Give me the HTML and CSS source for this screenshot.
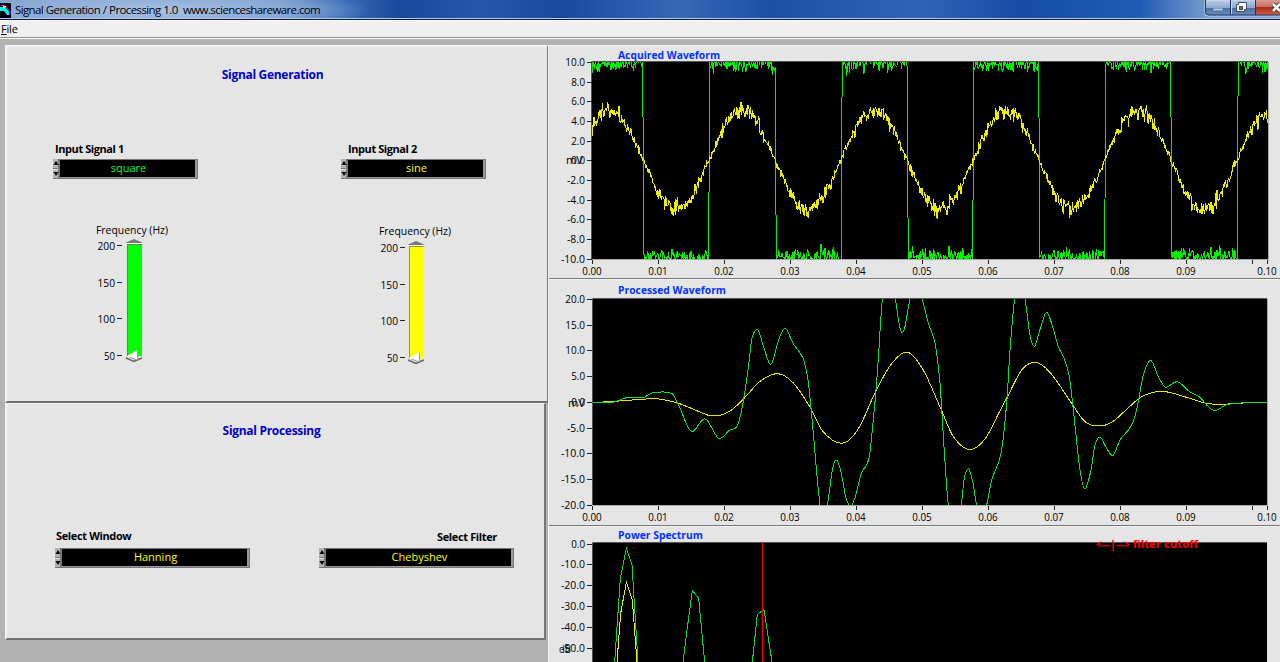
FILE: index.html
```html
<!DOCTYPE html>
<html lang="en">
<head>
<meta charset="utf-8">
<title>Signal Generation / Processing 1.0</title>
<link rel="stylesheet" href="styles.css">
</head>
<body>
<div class="window">
  <header class="titlebar">
    <svg class="app-icon" width="11" height="15" viewBox="0 0 11 15"><rect width="11" height="15" fill="#000"/><path d="M1 2.500h4l5 6v3" fill="none" stroke="#f0f"/><path d="M0 4h5l4 4.500V12H7L4 8H0z" fill="#00f5ee"/><path d="M3 3h3v1.500H3z" fill="#ff0"/></svg>
    <span class="title-text">Signal Generation / Processing 1.0&nbsp; www.scienceshareware.com</span>
    <svg class="controls" width="76" height="17" viewBox="0 0 76 17">
      <defs>
        <linearGradient id="glass" x2="0" y2="1"><stop stop-color="#b9cbe4"/><stop offset=".48" stop-color="#8fa9cf"/><stop offset=".5" stop-color="#476da9"/><stop offset="1" stop-color="#6b91c6"/></linearGradient>
        <linearGradient id="close" x2="0" y2="1"><stop stop-color="#d99c91"/><stop offset=".48" stop-color="#c66c5c"/><stop offset=".5" stop-color="#a92a17"/><stop offset="1" stop-color="#cf6047"/></linearGradient>
      </defs>
      <path d="M1 0v13q0 3 3 3h72V0z" fill="url(#glass)" stroke="#d1def0"/>
      <path d="M52 0h24v15H52z" fill="url(#close)"/>
      <path d="M1.500 0v12q0 3 3 3H76M26.500 0v15M51.500 0v15" fill="none" stroke="#1f355e"/>
      <path d="M27.500 0v14" stroke="#c8d7eb"/>
      <rect x="9.500" y="8.500" width="9" height="2" fill="#c3d1e4" stroke="#8296b6"/>
      <path d="M34.500 2.500h8v7h-2v2h-8v-7h2z" fill="#f4f4f4" stroke="#444b5a"/><rect x="35.500" y="6.500" width="3" height="3" fill="#57739f" stroke="#444b5a"/>
      <path d="M69 4l7 7M76 4l-7 7" stroke="#4d3437" stroke-width="4.500"/><path d="M69 4l7 7M76 4l-7 7" stroke="#fff" stroke-width="2.500"/>
    </svg>
  </header>
  <nav class="menubar"><span class="menu-item"><u>F</u>ile</span></nav>
  <main class="workspace">
    <div class="left">
      <section class="panel generation">
        <h2 class="heading">Signal Generation</h2>
        <div class="inputs">
          <div class="channel">
            <label class="label">Input Signal 1</label>
            <div class="selector"><svg class="spin" width="6" height="20"><use href="#spinner"/></svg><span class="value green">square</span></div>
            <svg class="slider" data-color="#00ff00" width="90" height="145" viewBox="0 0 90 145"></svg>
          </div>
          <div class="channel second">
            <label class="label">Input Signal 2</label>
            <div class="selector"><svg class="spin" width="6" height="20"><use href="#spinner"/></svg><span class="value">sine</span></div>
            <svg class="slider" data-color="#ffff00" width="90" height="145" viewBox="0 0 90 145"></svg>
          </div>
        </div>
      </section>
      <section class="panel processing">
        <h2 class="heading">Signal Processing</h2>
        <div class="filters">
          <div class="filter">
            <label class="label">Select Window</label>
            <div class="selector"><svg class="spin" width="6" height="20"><use href="#spinner"/></svg><span class="value">Hanning</span></div>
          </div>
          <div class="filter last">
            <label class="label">Select Filter</label>
            <div class="selector"><svg class="spin" width="6" height="20"><use href="#spinner"/></svg><span class="value">Chebyshev</span></div>
          </div>
        </div>
      </section>
    </div>
    <div class="charts">
      <svg id="acquired" class="chart" width="732" height="234" viewBox="548 45 732 234"></svg>
      <svg id="processed" class="chart" width="732" height="247" viewBox="548 279 732 247"></svg>
      <svg id="spectrum" class="chart" width="732" height="136" viewBox="548 526 732 136"></svg>
    </div>
  </main>
</div>
<svg class="symbols" width="0" height="0">
  <symbol id="spinner" viewBox="0 0 6 20"><path d="M0 0h6v20H0z" fill="#b2b2b2"/><path d="M5.500 0v9.500H0M5.500 10v9.500H0" fill="none" stroke="#777"/><path d="M0 10.500h5" stroke="#e8e8e8"/><path d="M0.500 6L3 2l2.500 4zM0.500 13L3 17l2.500-4z" fill="#000"/></symbol>
</svg>
<script src="charts.js"></script>
</body>
</html>
```

FILE: styles.css
```css
* { box-sizing: border-box; }
body { margin: 0; overflow: hidden; background: #b2b2b2; color: #000; font-family: "Open Sans", "Noto Sans", sans-serif; font-size: 11px; }
.window { width: 1280px; height: 662px; display: flex; flex-direction: column; overflow: hidden; }
.titlebar { flex: none; height: 21px; display: flex; align-items: flex-start; border-bottom: 1px solid #fff; box-shadow: inset 0 -1px #07194a, inset 0 -2px #b5cae8;
  background: radial-gradient(ellipse 210px 22px at 160px 10px, rgba(180,200,230,.85), rgba(150,180,220,.65) 65%, transparent), linear-gradient(90deg, #7e9dcc 0, #6a90c8 280px, #3d6fb9 340px, #18489a 400px, #2558a8 480px, #174a9d 560px, #3669b5 680px, #1b50a5 770px, #2f65b5 920px, #164ca6 1020px, #205bb4 1140px, #7398cc 1205px, #7398cc); }
.app-icon { flex: none; margin-top: 3px; }
.title-text { margin: 2px 0 0 4px; font-size: 11.5px; line-height: 16px; letter-spacing: -.61px; word-spacing: .3px; white-space: pre; }
.controls { flex: none; margin-left: auto; }
.menubar { flex: none; height: 18px; background: #f0f0f0; border-bottom: 1px solid #fff; box-shadow: inset 0 -1px #8d8d8d; }
.menu-item { display: block; padding-left: 1px; line-height: 16px; letter-spacing: -.2px; }
.workspace { flex: 1; display: flex; padding-top: 6px; background: #b2b2b2; }
.left { width: 548px; padding-left: 5px; }
.panel { background: #e5e5e5; border: solid; border-width: 2px; border-color: #f3f3f3 #777 #707070 #f3f3f3; }
.generation { width: 543px; height: 358px; border-right-width: 1px; }
.processing { width: 541px; height: 237px; border-top-width: 1px; }
.heading { margin: 20px 0 0; padding-right: 9px; text-align: center; font-size: 12px; line-height: 16px; letter-spacing: -.3px; color: #0000cc; }
.processing .heading { margin-top: 19px; padding-right: 8px; }
.inputs { display: flex; gap: 143px; padding: 58px 0 0 46px; }
.channel { width: 145px; }
.label { display: block; padding-left: 2px; font-size: 11px; font-weight: 700; line-height: 16px; letter-spacing: -.42px; white-space: nowrap; }
.selector { display: flex; height: 20px; margin-top: 2px; }
.second .label { padding-left: 7px; }
.spin { flex: none; }
.value { flex: 1; background: #000; border: solid #999; border-width: 1px 3px 2px 1px; outline: 1px solid #777; outline-offset: -1px; color: #ffff00; text-align: center; line-height: 16px; padding-left: 2px; }
.green { color: #00ff33; }
.slider { display: block; margin: 44px 0 0 40px; overflow: visible; }
.second .slider { margin: 45px 0 0 34px; }
.filters { display: flex; gap: 70px; padding: 89px 0 0 48px; }
.filter { width: 195px; }
.filter + .filter { margin-left: -1px; }
.filter .label { padding-left: 1px; letter-spacing: -.36px; }
.filter .selector { margin-top: 4px; }
.filter.last .label { padding: 0 17px 0 0; text-align: right; position: relative; top: 1px; }
.charts { flex: none; width: 732px; background: #e5e5e5; }
.chart { display: block; }
text { font-family: "Open Sans", "Noto Sans", sans-serif; font-size: 11.5px; fill: #000; }
.chart-title { font-weight: 700; font-size: 11px; fill: #0033ff; }
.cutoff { font-weight: 700; font-size: 11px; fill: #ff0000; }
.symbols { display: block; }
```

FILE: charts.js
```js
const el = id => document.getElementById(id);
const text = (x, y, s, w, cls = '', anchor = 'start') =>
  `<text x="${x}" y="${y}" class="${cls}" text-anchor="${anchor}"${w ? ` textLength="${w}" lengthAdjust="spacingAndGlyphs"` : ''}>${s}</text>`;
const line = (pts, color, width = 1) =>
  `<polyline points="${pts.map(p => p.join()).join(' ')}" fill="none" stroke="${color}" stroke-width="${width}" shape-rendering="crispEdges"/>`;

function curve(pts, color) {
  let d = `M${pts[0]}`;
  for (let i = 0; i < pts.length - 1; i++) {
    const a = pts[Math.max(0, i - 1)], b = pts[i], c = pts[i + 1], e = pts[Math.min(pts.length - 1, i + 2)];
    const s1 = (c[0] - a[0]) ? (c[1] - a[1]) / (c[0] - a[0]) : 0;
    const s2 = (e[0] - b[0]) ? (e[1] - b[1]) / (e[0] - b[0]) : 0;
    const flat1 = (b[1] - a[1]) * (c[1] - b[1]) <= 0 ? 0 : s1;
    const flat2 = (c[1] - b[1]) * (e[1] - c[1]) <= 0 ? 0 : s2;
    const h = (c[0] - b[0]) / 3;
    d += `C${b[0] + h},${b[1] + flat1 * h} ${c[0] - h},${c[1] - flat2 * h} ${c}`;
  }
  return `<path d="${d}" fill="none" stroke="${color}" stroke-width="1" shape-rendering="crispEdges"/>`;
}

function frame(o, content) {
  let s = `<rect x="548" y="${o.y0}" width="732" height="${o.h}" fill="#e5e5e5"/><path d="M548 ${o.y0 + .5}H1280M548.500 ${o.y0}v${o.h}" stroke="#f3f3f3"/>`;
  s += text(618, o.titleY, o.title, o.titleW, 'chart-title');
  s += `<rect x="${o.left}" y="${o.top}" width="${o.right - o.left}" height="${o.bottom - o.top}" fill="#000"/>`;
  s += `<clipPath id="clip${o.y0}"><rect x="${o.left}" y="${o.top}" width="${o.right - o.left}" height="${o.bottom - o.top}"/></clipPath><g clip-path="url(#clip${o.y0})">${content}</g>`;
  s += `<path d="M${o.left - .5} ${o.bottom}V${o.top - .5}H${o.right}" stroke="#555" fill="none"/>`;
  o.labels.forEach((t, i) => {
    const y = o.first + i * o.step;
    s += text(585, y + 4, t, t.length * 6 - (t[0] === '-' ? 6 : 4.2), '', 'end');
    s += `<path d="M587 ${Math.round(y) + .5}h5" stroke="#222"/>`;
  });
  s += text(o.unitX, o.unitY, o.unit, o.unit === 'mV' ? 17 : 12);
  if (o.time) {
    s += `<path d="M${o.left} ${o.bottom + .5}H${o.right + .5}V${o.top}" stroke="#aaa" fill="none"/>`;
    for (let i = 0; i <= 10; i++) {
      const x = i === 10 ? 1267.5 : Math.round(592 + i * 65.95) + .5;
      s += `<path d="M${x} ${o.bottom + 1}v4" stroke="#222"/>` + text(x - .5, o.timeY, i === 10 ? '0.10' : '0.0' + i, 19.5, '', 'middle');
    }
    s += `<path d="M1252.500 ${o.bottom + 1}v4" stroke="#222"/><path d="M549 ${o.y0 + o.h - .5}H1280" stroke="#777"/>`;
  }
  return s;
}

/* Seeded noise keeps the traces stable between loads. */
let seed = 41;
const rnd = () => (seed = (seed * 16807) % 2147483647) / 2147483647;
const square = [], sine = [];
const edges = [643, 709, 775.5, 841.5, 907.5, 973, 1039, 1105, 1171, 1237.5];
for (let x = 592; x <= 1268; x += .66) {
  const high = edges.filter(e => e <= x).length % 2 === 0;
  const n = Math.max(-1, (rnd() + rnd() + rnd() - 1.35) * 9);
  square.push([x, high ? 62 + n : 258 - n]);
  const phase = Math.sin(2 * Math.PI * (x - 709) / 132);
  const amp = 3.5 + Math.abs(phase) * 5.5;
  sine.push([x, 160 - 49 * phase + (rnd() + rnd() + rnd() - 1.5) * amp]);
}
el('acquired').innerHTML = frame({ y0: 45, h: 234, left: 592, right: 1268, top: 62, bottom: 259, title: 'Acquired Waveform', titleW: 102, titleY: 59, labels: ['10.0', '8.0', '6.0', '4.0', '2.0', '0.0', '-2.0', '-4.0', '-6.0', '-8.0', '-10.0'], first: 62, step: 19.65, unit: 'mV', unitX: 566, unitY: 164, time: true, timeY: 275 }, line(square, '#00f000') + line(sine, '#eeee00'));

const map = (pts, x, y) => pts.map(p => [x + p[0] / 3, y + p[1] / 3]);
const yellow = map([[135,367],[185,365],[240,361],[320,356],[385,368],[430,385],[495,408],[545,394],[590,353],[635,305],[688,281],[735,308],[785,380],[825,455],[882,490],[930,448],[985,330],[1030,252],[1075,216]], 548, 280)
  .concat(map([[68,267],[122,385],[160,470],[210,509],[255,477],[300,392],[325,345],[365,270],[404,247],[450,277],[515,370],[555,425],[595,438],[635,427],[680,388],[725,350],[785,334],[860,352],[915,369],[958,373],[1045,368],[1103,367]], 900, 280));
const green = map([[135,367],[190,367],[240,353],[280,354],[320,337],[372,341],[392,375],[432,455],[470,416],[515,476],[545,450],[568,437],[585,370],[600,270],[612,175],[628,149],[648,205],[668,254],[690,185],[711,144],[735,190],[765,235],[780,300],[795,450],[812,640],[825,720],[838,675],[855,560],[866,541],[880,580],[893,650],[908,679],[922,650],[940,580],[963,535],[975,430],[988,280],[1003,60],[1020,-20],[1042,56],[1053,130]], 548, 280)
  .concat(map([[7,158],[15,140],[30,57],[45,20],[66,57],[85,130],[105,190],[120,310],[132,500],[145,675],[165,760],[184,675],[192,600],[205,566],[218,605],[230,675],[245,710],[260,675],[275,600],[303,520],[320,370],[330,210],[344,57],[360,0],[375,57],[390,165],[403,199],[418,155],[440,97],[458,140],[475,200],[492,235],[508,290],[520,390],[540,570],[555,626],[572,575],[585,495],[600,471],[617,500],[638,527],[660,480],[695,435],[712,380],[730,285],[752,241],[775,290],[798,322],[830,305],[870,336],[900,352],[920,375],[945,392],[980,374],[1045,368],[1103,367]], 900, 280));
el('processed').innerHTML = frame({ y0: 279, h: 247, left: 593, right: 1267, top: 299, bottom: 505, title: 'Processed Waveform', titleW: 108, titleY: 294, labels: ['20.0', '15.0', '10.0', '5.0', '0.0', '-5.0', '-10.0', '-15.0', '-20.0'], first: 299, step: 25.7, unit: 'mV', unitX: 568, unitY: 407, time: true, timeY: 521 }, curve(yellow, '#e5e500') + curve(green, '#00e535'));

const peaks = [[[200,456],[217,205],[235,114],[252,165],[270,456]], [[405,456],[415,375],[433,241],[452,265],[470,456]], [[613,456],[628,313],[648,299],[672,456]]];
el('spectrum').innerHTML = frame({ y0: 526, h: 140, left: 593, right: 1267, top: 543, bottom: 666, title: 'Power Spectrum', titleW: 85, titleY: 539, labels: ['0.0', '-10.0', '-20.0', '-30.0', '-40.0', '-50.0'], first: 543.5, step: 20.95, unit: 'dB', unitX: 559, unitY: 653 },
  peaks.map(p => line(map(p, 548, 510), '#00dd35')).join('') +
  line(map([[207,456],[218,310],[235,217],[253,270],[267,456]], 548, 510), '#eeee00') +
  '<path d="M762.500 543V662" stroke="#f00" stroke-width="1.400"/>') +
  text(1096, 548, '&lt;--|--&gt; filter cutoff', 102, 'cutoff');

document.querySelectorAll('.slider').forEach((svg, index) => {
  let s = text(3 + index, 11, 'Frequency (Hz)', 72);
  [200, 150, 100, 50].forEach((n, i) => {
    const y = 23 + i * 36.7 + index;
    s += text(22 + index, y + 4, n, n === 50 ? 11 : 17.5, '', 'end') + `<path d="M${24 + index} ${Math.round(y) - .5}h5" stroke="#222"/>`;
  });
  s += `<g transform="translate(0 ${index})"><rect x="34" y="21" width="15" height="112" fill="${svg.dataset.color}"/><path d="M34.500 133V21.500h15" fill="none" stroke="#666" stroke-opacity=".7"/>`;
  s += '<path d="M32 20l9-4 9 4z" fill="#777"/><path d="M32 20.500h18" stroke="#fff"/><path d="M33 135l8 3.500 8-3.500" fill="none" stroke="#666" stroke-width="1.500"/><path d="M34 133l10-6v10z" fill="#fff"/><path d="M44.500 128v9l-8-3" fill="none" stroke="#999"/></g>';
  svg.innerHTML = s;
});
```
